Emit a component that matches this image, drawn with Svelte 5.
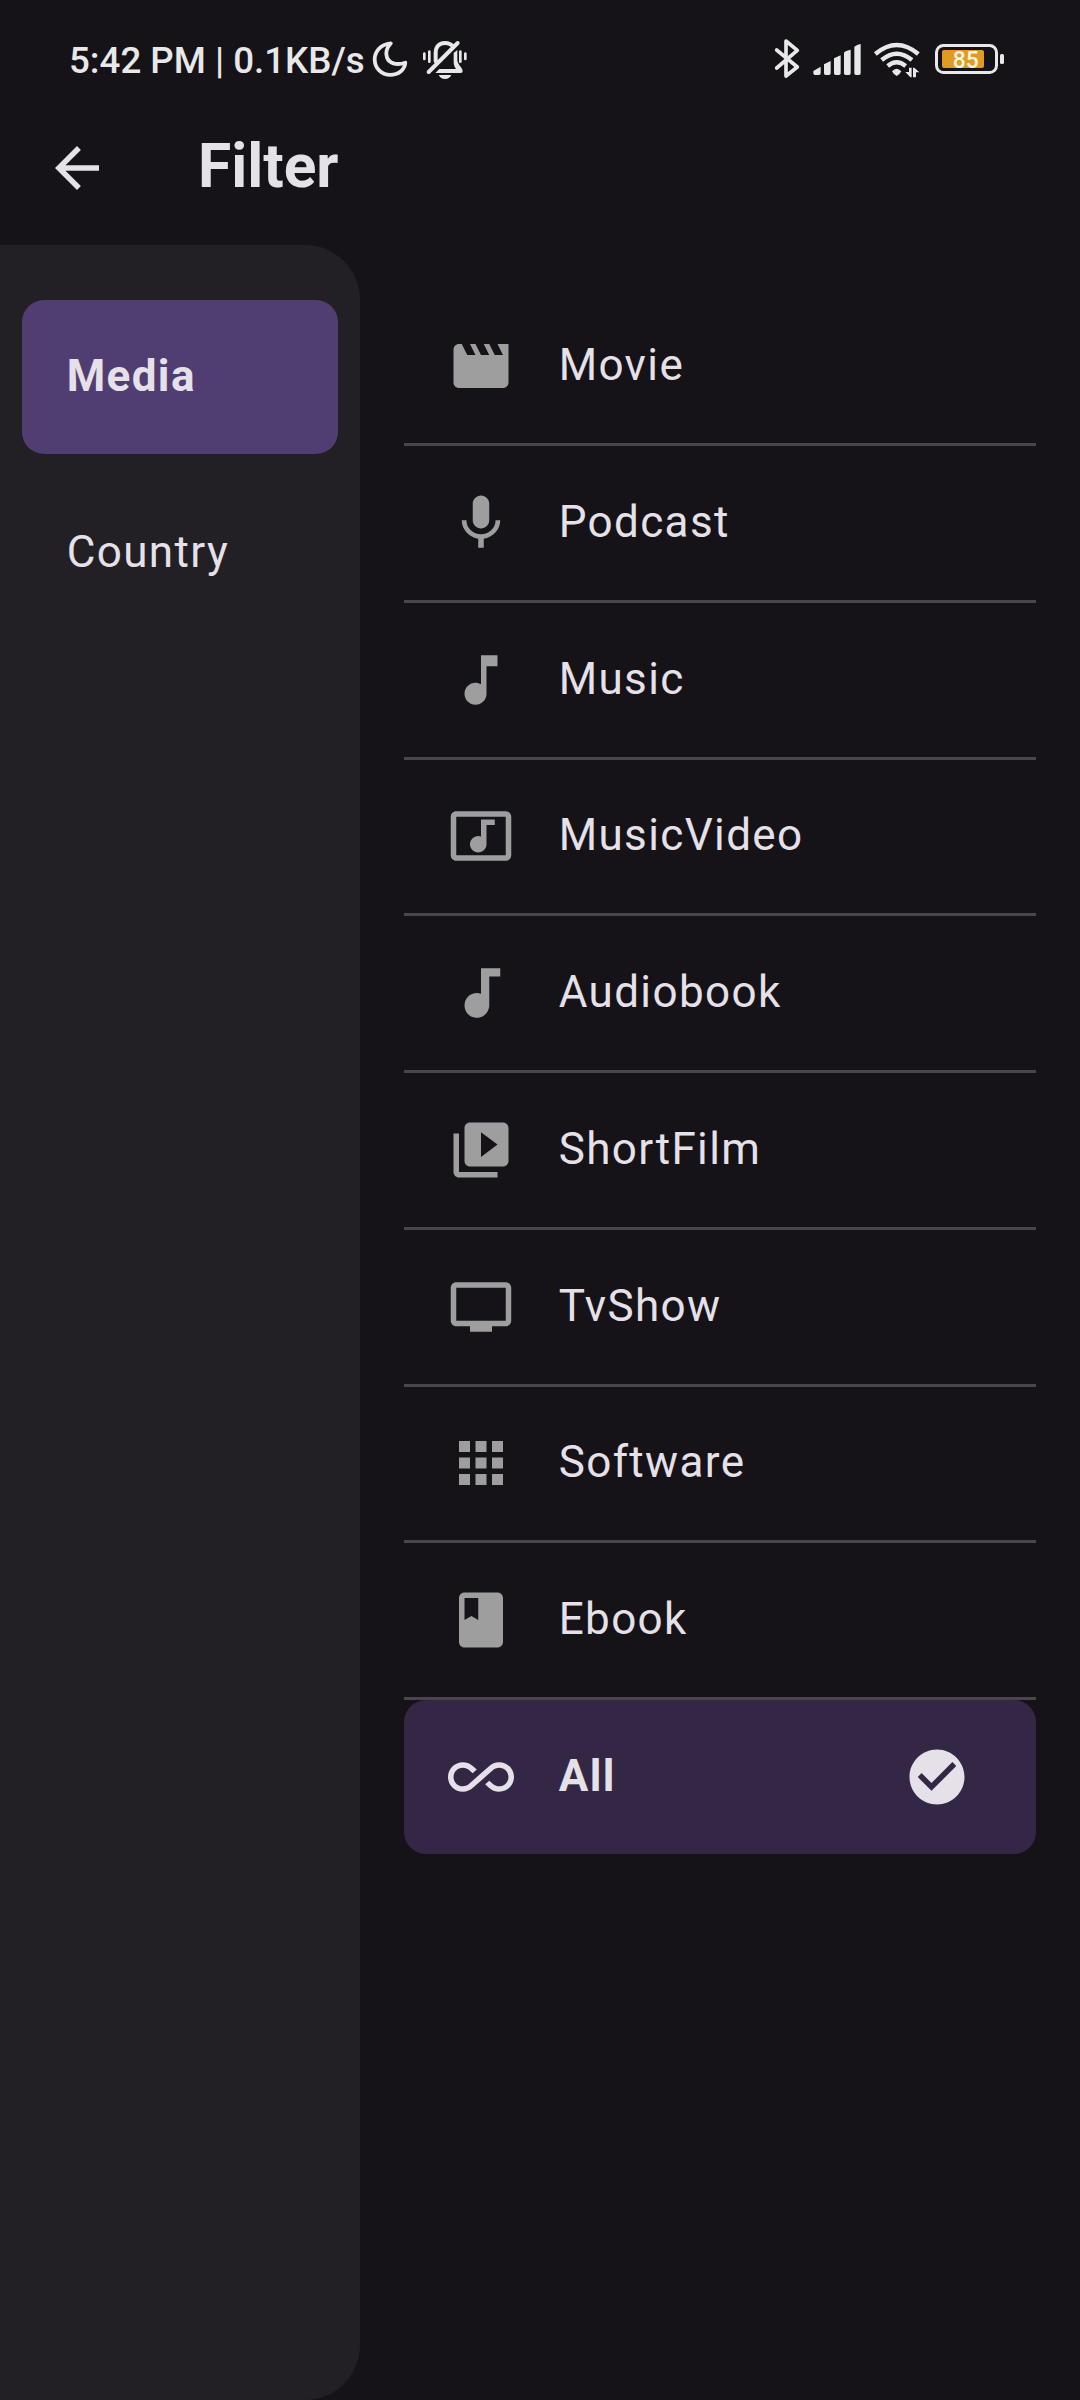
<script>
  const categories = ['Media', 'Country'];
  let activeCategory = $state('Media');
  let selected = $state('All');

  const mediaTypes = [
    { name: 'Movie', path: 'M18 4l2 4h-3l-2-4h-2l2 4h-3l-2-4H8l2 4H7L5 4H4c-1.1 0-1.99.9-1.99 2L2 18c0 1.1.9 2 2 2h16c1.1 0 2-.9 2-2V4h-4z' },
    { name: 'Podcast', path: 'M12 14c1.66 0 2.99-1.34 2.99-3L15 5c0-1.66-1.34-3-3-3S9 3.34 9 5v6c0 1.66 1.34 3 3 3zm5.3-3c0 3-2.54 5.1-5.3 5.1S6.7 14 6.7 11H5c0 3.42 2.72 6.23 6 6.72V21h2v-3.28c3.28-.48 6-3.3 6-6.72h-1.7z' },
    { name: 'Music', path: 'M12 3v10.55c-.59-.34-1.27-.55-2-.55-2.21 0-4 1.79-4 4s1.79 4 4 4 4-1.79 4-4V7h4V3h-6z' },
    { name: 'MusicVideo', path: 'M21 3H3c-1.1 0-2 .9-2 2v14c0 1.1.9 2 2 2h18c1.1 0 2-.9 2-2V5c0-1.1-.9-2-2-2zm0 16H3V5h18v14zM8 15c0-1.66 1.34-3 3-3 .35 0 .69.07 1 .18V6h5v2h-3v7.03c-.02 1.64-1.35 2.97-3 2.97-1.66 0-3-1.34-3-3z' },
    { name: 'Audiobook', path: 'M12 3v9.28c-.47-.17-.97-.28-1.5-.28C8.01 12 6 14.01 6 16.5S8.01 21 10.5 21c2.31 0 4.2-1.75 4.45-4H15V6h4V3h-7z' },
    { name: 'ShortFilm', path: 'M4 6H2v14c0 1.1.9 2 2 2h14v-2H4V6zm16-4H8c-1.1 0-2 .9-2 2v12c0 1.1.9 2 2 2h12c1.1 0 2-.9 2-2V4c0-1.1-.9-2-2-2zm-8 12.5v-9l6 4.5-6 4.5z' },
    { name: 'TvShow', path: 'M21 3H3c-1.1 0-2 .9-2 2v12c0 1.1.9 2 2 2h5v2h8v-2h5c1.1 0 1.99-.9 1.99-2L23 5c0-1.1-.9-2-2-2zm0 14H3V5h18v12z' },
    { name: 'Software', path: 'M4 8h4V4H4v4zm6 12h4v-4h-4v4zm-6 0h4v-4H4v4zm0-6h4v-4H4v4zm6 0h4v-4h-4v4zm6-10v4h4V4h-4zm-6 4h4V4h-4v4zm6 6h4v-4h-4v4zm0 6h4v-4h-4v4z' },
    { name: 'Ebook', path: 'M18 2H6c-1.1 0-2 .9-2 2v16c0 1.1.9 2 2 2h12c1.1 0 2-.9 2-2V4c0-1.1-.9-2-2-2zM6 4h5v8l-2.5-1.5L6 12V4z' },
    { name: 'All', path: 'M18.6 6.62c-1.44 0-2.8.56-3.77 1.53L12 10.66 10.48 12h.01L7.8 14.39c-.64.64-1.49.99-2.4.99-1.87 0-3.39-1.51-3.39-3.38S3.53 8.62 5.4 8.62c.91 0 1.76.35 2.44 1.03l1.13 1 1.51-1.34L9.22 8.2C8.2 7.18 6.84 6.62 5.4 6.62 2.42 6.62 0 9.04 0 12s2.42 5.38 5.4 5.38c1.44 0 2.8-.56 3.77-1.53l2.83-2.5.01.01L13.52 12h-.01l2.69-2.39c.64-.64 1.49-.99 2.4-.99 1.87 0 3.39 1.51 3.39 3.38s-1.52 3.38-3.39 3.38c-.9 0-1.76-.35-2.44-1.03l-1.14-1.01-1.51 1.34 1.27 1.12c1.02 1.01 2.37 1.57 3.82 1.57 2.98 0 5.4-2.41 5.4-5.38s-2.42-5.37-5.4-5.37z' }
  ];
</script>

<div class="screen">
  <div class="status">
    <div class="status-left">
      <span class="clock">5:42 PM | 0.1KB/s</span>
      <svg class="moon" viewBox="371 39 38 40" width="38" height="40">
        <path d="M390.800 43.300C380 44.300 374.700 52 374.700 59.200C374.700 68.300 381.500 74.900 390.200 74.900C398.400 74.900 404.700 70 405.300 62.700C396 65.800 389 63 387 57.500C385.300 52.500 387 47.500 390.800 43.300Z" />
      </svg>
      <svg class="bell" viewBox="1146 57 138 123" width="46" height="41">
        <path class="line" d="M1166 156L1253 69M1187 124V99C1187 78 1199 69 1215 69C1226 69 1234 73 1239 80" />
        <path class="fill" d="M1241 99L1252 90V119C1252 133 1268 143 1268 153Q1268 159 1262 159H1186L1198 147H1248C1242 139 1241 132 1241 123ZM1196 165H1234Q1228 177 1215 177Q1202 177 1196 165Z" />
        <path class="wave" d="M1153 101V117M1168 95V125M1261 95V125M1276 101V117" />
      </svg>
    </div>
    <div class="status-right">
      <svg class="bluetooth" viewBox="72 54 78 123" width="26" height="41">
        <path d="M80 90L142 141L108 168V63L142 91L80 144" />
      </svg>
      <svg class="signal" viewBox="189 72 144 93" width="48" height="31">
        <path d="M190 153L212 140V160Q212 165 207 165H195Q190 165 190 160ZM222 133L242 123V160Q242 165 237 165H227Q222 165 222 160ZM252 115L272 106V160Q272 165 267 165H257Q252 165 252 160ZM282 98Q283 94 302 89V160Q302 165 297 165H287Q282 165 282 160ZM313 82Q313 77 332 72V160Q332 165 327 165H318Q313 165 313 160Z" />
      </svg>
      <svg class="wifi" viewBox="369 63 144 111" width="48" height="37">
        <path class="arc" d="M376 102Q440 48 505 102M395 120Q440 82 486 120M413 138Q440 116 467 138" />
        <path class="fill" d="M426 154Q440 139 454 154Q450 163 440 168Q430 163 426 154ZM477 143H485V172H481L466 156H477ZM489 143H493L508 157H498V172H489Z" />
      </svg>
      <svg class="battery" viewBox="935 44 70 30" width="70" height="30">
        <rect class="shell" x="936.5" y="45.500" width="60" height="27" rx="7" />
        <rect class="charge" x="942" y="50" width="42" height="18" rx="2" />
        <rect class="tip" x="1000" y="54" width="4" height="10" rx="1.500" />
        <text x="952.700" y="68" textLength="26" lengthAdjust="spacingAndGlyphs">85</text>
      </svg>
    </div>
  </div>

  <header>
    <svg class="icon light" viewBox="0 0 24 24"><path d="M20 11H7.830l5.590-5.590L12 4l-8 8 8 8 1.410-1.410L7.830 13H20v-2z" /></svg>
    <h1>Filter</h1>
  </header>

  <main>
    <nav>
      {#each categories as category}
        <button class="category" class:active={activeCategory === category} onclick={() => (activeCategory = category)}>
          <span>{category}</span>
        </button>
      {/each}
    </nav>
    <div class="options">
      {#each mediaTypes as item}
        <button class="option" class:active={selected === item.name} onclick={() => (selected = item.name)}>
          <svg class="icon" viewBox="0 0 24 24"><path d={item.path} /></svg>
          <span class="label">{item.name}</span>
          {#if selected === item.name}
            <svg class="icon" viewBox="0 0 24 24"><path d="M12 2C6.480 2 2 6.480 2 12s4.480 10 10 10 10-4.480 10-10S17.520 2 12 2zm-2 15l-5-5 1.410-1.410L10 14.170l7.590-7.590L19 8l-9 9z" /></svg>
          {/if}
        </button>
      {/each}
    </div>
  </main>
</div>

<style>
  :global(body) {
    margin: 0;
    background: #151318;
  }
  .screen {
    width: 1080px;
    height: 2400px;
    display: flex;
    flex-direction: column;
    background: #151318;
    color: #e6e0e9;
    font-family: Roboto, "Noto Sans", sans-serif;
    overflow: hidden;
  }
  svg {
    display: block;
    flex: none;
  }
  .status {
    height: 91px;
    box-sizing: border-box;
    padding: 0 75px 0 69px;
    display: flex;
    justify-content: space-between;
    align-items: flex-start;
    color: #e8e8e8;
  }
  .status-left,
  .status-right {
    display: flex;
    align-items: flex-start;
  }
  .clock {
    width: 302px;
    margin-top: 39px;
    font-size: 36.7px;
    font-weight: 500;
    line-height: 44px;
    white-space: nowrap;
  }
  .moon {
    margin-top: 39px;
    fill: none;
    stroke: currentColor;
    stroke-width: 3.8;
    stroke-linejoin: round;
  }
  .bell {
    margin: 39px 0 0 13px;
  }
  .line,
  .wave,
  .arc {
    fill: none;
    stroke: currentColor;
    stroke-width: 12;
    stroke-linecap: round;
  }
  .wave {
    stroke-width: 8;
  }
  .arc {
    stroke-width: 13;
    stroke-linecap: butt;
  }
  .fill,
  .signal,
  .tip {
    fill: currentColor;
  }
  .bluetooth {
    margin-top: 38px;
    fill: none;
    stroke: currentColor;
    stroke-width: 11;
    stroke-linecap: round;
    stroke-linejoin: round;
  }
  .signal {
    margin: 44px 0 0 13px;
  }
  .wifi {
    margin: 41px 0 0 12px;
  }
  .battery {
    margin: 44px 0 0 14px;
  }
  .shell {
    fill: none;
    stroke: currentColor;
    stroke-width: 3;
  }
  .charge {
    fill: #e09b26;
  }
  .battery text {
    fill: #fff3dc;
    font-size: 23px;
    font-weight: 500;
  }
  header {
    height: 154px;
    box-sizing: border-box;
    padding-left: 44px;
    display: flex;
    align-items: center;
    gap: 88px;
  }
  h1 {
    margin: 0;
    padding-bottom: 3px;
    font-size: 60.5px;
    font-weight: 700;
    line-height: 76px;
  }
  .icon {
    width: 66px;
    height: 66px;
    fill: #9e9e9e;
  }
  .icon.light,
  .option.active .icon {
    fill: #e6e0e9;
  }
  main {
    flex: 1;
    display: flex;
  }
  nav {
    width: 360px;
    box-sizing: border-box;
    padding: 55px 22px;
    display: flex;
    flex-direction: column;
    gap: 22px;
    background: #222025;
    border-radius: 0 55px 55px 0;
  }
  button {
    margin: 0;
    border: 0;
    background: none;
    color: inherit;
    font: 400 44px/66px Roboto, "Noto Sans", sans-serif;
    letter-spacing: 1.375px;
    text-align: left;
  }
  .category {
    height: 154px;
    padding: 0 44px 2px 44.7px;
    border-radius: 22px;
  }
  .category.active {
    background: #503d72;
    font-weight: 700;
  }
  .options {
    flex: 1;
    padding: 44.25px 44px 0;
  }
  .option {
    width: 100%;
    height: 156.75px;
    box-sizing: border-box;
    padding: 0 66px 0 44px;
    display: flex;
    align-items: center;
    gap: 44px;
    border-bottom: 3px solid #49454f;
  }
  .option:last-child {
    height: 154px;
    border-bottom: 0;
  }
  .option.active {
    background: #332745;
    border-radius: 22px;
    font-weight: 700;
  }
  .label {
    flex: 1;
    padding: 0 0 2px 0.7px;
  }
</style>
